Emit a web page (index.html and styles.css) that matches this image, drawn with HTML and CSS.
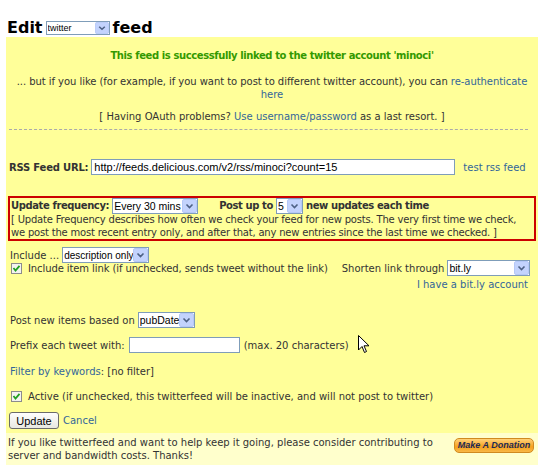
FILE: index.html
```html
<!DOCTYPE html>
<html lang="en">
<head>
    <meta charset="UTF-8">
    <title>Edit feed</title>
    <link rel="stylesheet" href="styles.css">
</head>
<body>
    <h1 class="title">Edit <select class="sel sel-title"><option>twitter</option></select> feed</h1>
    <div class="panel">
        <p class="linked">This feed is successfully linked to the twitter account 'minoci'</p>
        <p class="center reauth">... but if you like (for example, if you want to post to different twitter account), you can <a href="#">re&#8209;authenticate here</a></p>
        <p class="center oauth">[ Having OAuth problems? <a href="#">Use username/password</a> as a last resort. ]</p>
        <hr class="dash">

        <div class="row rss">
            <b>RSS Feed URL:</b>
            <input class="txt txt-url" type="text" value="http://feeds.delicious.com/v2/rss/minoci?count=15">
            <a href="#">test rss feed</a>
        </div>

        <div class="freq">
            <div class="freq-line">
                <b>Update frequency:</b>
                <select class="sel sel-freq"><option>Every 30 mins</option></select>
                <b class="postup">Post up to</b>
                <select class="sel sel-num"><option>5</option></select>
                <b>new updates each time</b>
            </div>
            <div class="freq-note">[ Update Frequency describes how often we check your feed for new posts. The very first time we check, we post the most recent entry only, and after that, any new entries since the last time we checked. ]</div>
        </div>

        <div class="row include">
            Include ... <select class="sel sel-desc"><option>description only</option></select>
        </div>
        <div class="row itemlink">
            <input class="chk" type="checkbox" checked>
            <span class="itemlink-text">Include item link (if unchecked, sends tweet without the link)</span>
            <span class="shorten">Shorten link through <select class="sel sel-bitly"><option>bit.ly</option></select></span>
        </div>
        <div class="bitly-acct"><a href="#">I have a bit.ly account</a></div>

        <div class="row based">
            Post new items based on <select class="sel sel-date"><option>pubDate</option></select>
        </div>
        <div class="row prefix">
            Prefix each tweet with: <input class="txt txt-prefix" type="text"> (max. 20 characters)
        </div>
        <div class="row filter">
            <a href="#">Filter by keywords</a>: [no filter]
        </div>
        <div class="row active">
            <input class="chk" type="checkbox" checked>
            <span>Active (if unchecked, this twitterfeed will be inactive, and will not post to twitter)</span>
        </div>
        <div class="row actions">
            <button class="btn" type="button">Update</button>
            <a href="#">Cancel</a>
        </div>
        <svg class="cursor" width="12" height="19" viewBox="0 0 12 19">
            <path d="M0.5 0.5 L0.5 15 L4 11.5 L6.5 17.5 L8.5 16.5 L6 10.8 L11 10.8 Z" fill="#fff" stroke="#000" stroke-width="1"/>
        </svg>
    </div>
    <div class="footer">
        <div class="footer-text">If you like twitterfeed and want to help keep it going, please consider contributing to server and bandwidth costs. Thanks!</div>
        <a class="donate" href="#">Make A Donation</a>
    </div>
</body>
</html>
```

FILE: styles.css
```css
body {
    margin: 0;
    padding: 0;
    font-family: 'DejaVu Sans', Verdana, sans-serif;
    font-size: 10px;
    line-height: 13px;
    color: #333;
}
a {
    color: #336699;
    text-decoration: none;
}
.title {
    margin: 0;
    padding: 19px 0 0 7px;
    height: 18px;
    font-size: 16px;
    line-height: 18px;
    color: #000;
    display: flex;
    align-items: center;
    gap: 3px;
}

/* select boxes, XP style */
.sel {
    appearance: none;
    -webkit-appearance: none;
    font-family: 'Liberation Sans', Arial, sans-serif;
    font-size: 10.5px;
    letter-spacing: 0;
    color: #000;
    height: 16px;
    padding: 0 15px 0 1px;
    border: 1px solid #7f9db9;
    border-radius: 0;
    background: #fff url("data:image/svg+xml;utf8,<svg xmlns='http://www.w3.org/2000/svg' width='15' height='14'><rect x='0.5' y='0.5' width='14' height='13' rx='1.5' fill='%23c3d3fd' stroke='%23b5c8f7'/><path d='M4.5 5.5 L7.5 8.5 L10.5 5.5' fill='none' stroke='%234d6185' stroke-width='1.6'/></svg>") no-repeat right 0 center;
    vertical-align: middle;
    flex-shrink: 0;
}
.sel-title {
    width: 64px;
    height: 14px;
    font-size: 9px;
    font-weight: normal;
    background-size: 14px 12px;
}
.sel-freq { width: 86px; }
.sel-num { width: 27px; }
.sel-desc { width: 87px; font-size: 10px; }
.sel-bitly { width: 83px; }
.sel-date { width: 57px; }

.panel {
    position: relative;
    background-color: #ffff99;
    margin: 0 12px 0 6px;
    padding: 12px 2px 4px 2px;
}
.panel p {
    margin: 0;
}
.center {
    text-align: center;
}
.linked {
    text-align: center;
    font-weight: bold;
    letter-spacing: -0.4px;
    color: #339900;
}
.reauth {
    padding: 13px 0 0;
    letter-spacing: -0.05px;
}
.oauth {
    padding-top: 9px;
}
.dash {
    border: 0;
    border-top: 1px dashed #aaa;
    margin: 6px 8px 0 1px;
}
.row {
    display: flex;
    align-items: center;
    white-space: nowrap;
}
.rss {
    margin-top: 29px;
    padding-left: 1px;
    gap: 3px;
}
.rss b {
    letter-spacing: -0.2px;
}
.txt {
    font-family: 'Liberation Sans', Arial, sans-serif;
    font-size: 11px;
    color: #000;
    height: 16px;
    box-sizing: border-box;
    border: 1px solid #7f9db9;
    padding: 0 2px;
    margin: 0;
}
.txt-url {
    width: 364px;
    margin-right: 5px;
}
.txt-prefix {
    width: 111px;
    margin: 0 4px;
}
.freq {
    margin-top: 21px;
    border: 2px solid #cc0000;
    padding: 0 2px 0 1px;
}
.freq-line {
    display: flex;
    align-items: center;
    gap: 3px;
    height: 15px;
    white-space: nowrap;
}
.freq-line b {
    letter-spacing: -0.4px;
}
.freq-note {
    letter-spacing: -0.2px;
}
.postup {
    margin-left: 18px;
}
.include {
    margin-top: 6px;
    padding-left: 2px;
    gap: 3px;
}
.chk {
    appearance: none;
    -webkit-appearance: none;
    flex-shrink: 0;
    width: 11px;
    height: 11px;
    margin: 0 6px 0 3px;
    border: 1px solid #8c8c8c;
    background: #f4f4f0 url("data:image/svg+xml;utf8,<svg xmlns='http://www.w3.org/2000/svg' width='9' height='9'><path d='M1.5 4 L3.5 6.5 L7.5 1.8' fill='none' stroke='%2321a121' stroke-width='1.8'/></svg>") no-repeat center;
}
.itemlink {
    margin-top: -3px;
}
.itemlink-text {
    letter-spacing: -0.1px;
}
.shorten {
    margin-left: 14px;
    display: flex;
    align-items: center;
    gap: 3px;
}
.bitly-acct {
    text-align: right;
    padding-right: 8px;
    margin-top: 2px;
}
.based {
    margin-top: 21px;
    padding-left: 2px;
    gap: 3px;
}
.prefix {
    margin-top: 9px;
    padding-left: 2px;
}
.filter {
    margin-top: 12px;
    padding-left: 2px;
}
.active {
    margin-top: 12px;
}
.actions {
    margin-top: 9px;
    padding-left: 1px;
    gap: 4px;
}
.btn {
    font-family: 'Liberation Sans', Arial, sans-serif;
    font-size: 11px;
    color: #000;
    height: 17px;
    width: 50px;
    padding: 0;
    border: 1px solid #6b6b6b;
    border-radius: 3px;
    background: linear-gradient(#fefefe, #e8e8e2);
}
.cursor {
    position: absolute;
    left: 352px;
    top: 298px;
}
.footer {
    background-color: #ffffcc;
    margin: 0 12px 0 6px;
    padding: 3px 4px 8px 2px;
    display: flex;
    justify-content: space-between;
    align-items: flex-start;
}
.footer-text {
    width: 440px;
}
.donate {
    margin-top: 2px;
    width: 80px;
    height: 15px;
    box-sizing: border-box;
    border: 1px solid #d08a20;
    border-radius: 5px;
    background: linear-gradient(#ffd27a, #f6a11c 60%, #f8b848);
    font-family: 'Liberation Sans', Arial, sans-serif;
    font-size: 9px;
    font-weight: bold;
    font-style: italic;
    line-height: 13px;
    text-align: center;
    color: #1d2a55;
}
```
